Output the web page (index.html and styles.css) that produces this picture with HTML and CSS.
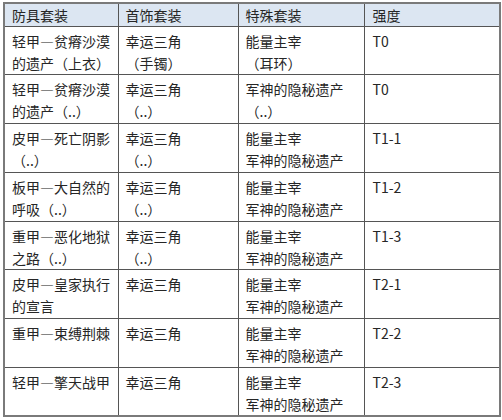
FILE: index.html
```html
<!DOCTYPE html>
<html lang="zh">
<head>
<meta charset="utf-8">
<link rel="stylesheet" href="styles.css">
</head>
<body>
<table class="sets">
  <colgroup>
    <col class="c1"><col class="c2"><col class="c3"><col class="c4">
  </colgroup>
  <thead>
    <tr class="head"><th>防具套装</th><th>首饰套装</th><th>特殊套装</th><th>强度</th></tr>
  </thead>
  <tbody>
    <tr><td>轻甲—贫瘠沙漠的遗产（上衣）</td><td>幸运三角<br>（手镯）</td><td>能量主宰<br>（耳环）</td><td>T0</td></tr>
    <tr><td>轻甲—贫瘠沙漠的遗产（..）</td><td>幸运三角<br>（..）</td><td>军神的隐秘遗产<br>（..）</td><td>T0</td></tr>
    <tr><td>皮甲—死亡阴影（..）</td><td>幸运三角<br>（..）</td><td>能量主宰<br>军神的隐秘遗产</td><td>T1-1</td></tr>
    <tr><td>板甲—大自然的呼吸（..）</td><td>幸运三角<br>（..）</td><td>能量主宰<br>军神的隐秘遗产</td><td>T1-2</td></tr>
    <tr><td>重甲—恶化地狱之路（..）</td><td>幸运三角<br>（..）</td><td>能量主宰<br>军神的隐秘遗产</td><td>T1-3</td></tr>
    <tr><td>皮甲—皇家执行的宣言</td><td>幸运三角</td><td>能量主宰<br>军神的隐秘遗产</td><td>T2-1</td></tr>
    <tr><td>重甲—束缚荆棘</td><td>幸运三角</td><td>能量主宰<br>军神的隐秘遗产</td><td>T2-2</td></tr>
    <tr><td>轻甲—擎天战甲</td><td>幸运三角</td><td>能量主宰<br>军神的隐秘遗产</td><td>T2-3</td></tr>
  </tbody>
</table>
</body>
</html>
```
FILE: styles.css
```css
html, body {
  margin: 0;
  padding: 0;
  background: #ffffff;
}
body {
  padding: 2px 0 0 3px;
  font-family: "Noto Sans CJK SC", "Noto Sans", sans-serif;
  color: #262626;
}
.sets {
  border-collapse: collapse;
  table-layout: fixed;
  width: 496px;
  border: 2px solid #7a7a7a;
  font-size: 14px;
  line-height: 22px;
}
.c1 { width: 114px; }
.c2 { width: 120px; }
.c3 { width: 126px; }
.c4 { width: 136px; }
.sets th,
.sets td {
  border: 1px solid #555555;
  text-align: left;
  vertical-align: top;
  font-weight: normal;
  padding: 3px 7px 0 7px;
}
.sets th {
  background: #dce6f2;
  padding-top: 1px;
  line-height: 20px;
}
.sets .head {
  height: 23px;
}
.sets tbody tr {
  height: 48.75px;
}
.sets td:last-child,
.sets th:last-child {
  padding-left: 8px;
}
```
